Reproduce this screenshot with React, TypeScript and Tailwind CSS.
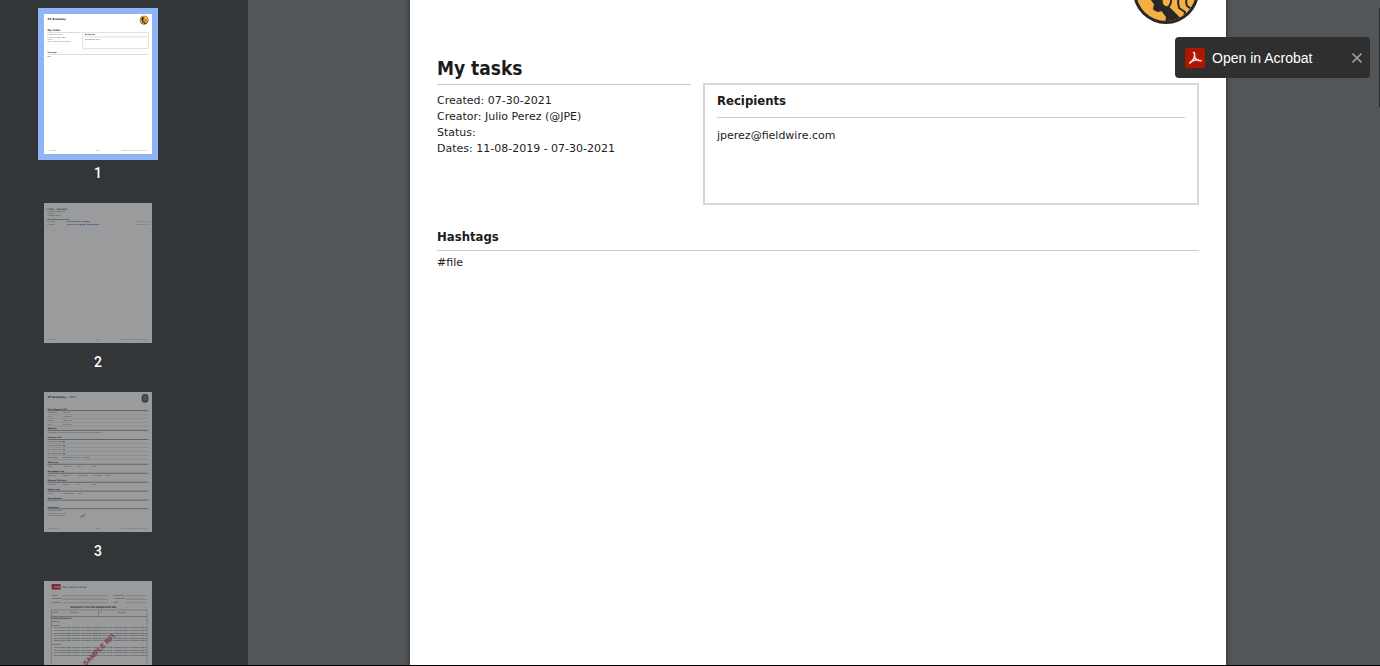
const ink = '#1c1c1c'

const Logo = ({ id }: { id: string }) => (
    <>
        <defs>
            <clipPath id={id}>
                <circle cx="33" cy="33" r="30" />
            </clipPath>
        </defs>
        <circle cx="33" cy="33" r="33" fill="#2a2726" />
        <circle cx="33" cy="33" r="30" fill="#f3b043" />
        <g clipPath={`url(#${id})`} fill="none" stroke="#2a2726" strokeWidth="2" strokeLinejoin="round">
            <path d="M17 12 L14 28 L19 42 L22 46 L21 51 L25 53 L29 52 L34 59 L33 66 H44 L46 60 L39 53 L36 50 L31 49 L28 42 L25 26 L34 14 Z" fill="#2a2726" />
            <path d="M28 36 L29 46 Q31 50 35 49 Q39 47 38 36" fill="#f3b043" />
            <path d="M47 36 L45 44 L46 50 L52 54 L51 61" />
            <path d="M55 36 L53 44 L54 48 L60 52" />
            <path d="M38 36 L47 30 L55 36 M25 26 L38 28" />
        </g>
    </>
)

// Thumbnails share the user units of a letter page, 816 x 1056
const Rule = ({ y, x = 27, to = 789, color = '#bdbdbd' }: { y: number; x?: number; to?: number; color?: string }) => (
    <line x1={x} x2={to} y1={y} y2={y} stroke={color} strokeWidth="4" />
)

const Footer = ({ name, page }: { name: string; page: string }) => (
    <g fontSize="11" fill="#777">
        <text x="27" y="1036">{name}</text>
        <text x="408" y="1036" textAnchor="middle">{page}</text>
        <text x="789" y="1036" textAnchor="end">Created with Fieldwire on 07-30-2021</text>
    </g>
)

const TasksPage = () => (
    <>
        <text x="27" y="46" fontSize="20" fontWeight="bold">SF Academy</text>
        <g transform="translate(723 12)"><Logo id="thumb-logo" /></g>
        <text x="27" y="130" fontSize="19" fontWeight="bold">My tasks</text>
        <Rule y={139} to={280} />
        <g fontSize="11">
            <text x="27" y="161">Created: 07-30-2021</text>
            <text x="27" y="177">Creator: Julio Perez (@JPE)</text>
            <text x="27" y="192">Status:</text>
            <text x="27" y="208">Dates: 11-08-2019 - 07-30-2021</text>
            <text x="307" y="194">jperez@fieldwire.com</text>
            <text x="27" y="322">#file</text>
        </g>
        <rect x="293" y="139" width="496" height="120" fill="none" stroke="#c4cccb" strokeWidth="4" />
        <text x="307" y="161" fontSize="13" fontWeight="bold">Recipients</text>
        <Rule y={172} x={307} to={776} />
        <text x="27" y="296" fontSize="13" fontWeight="bold">Hashtags</text>
        <Rule y={305} />
        <Footer name="SF Academy" page="Page 1" />
    </>
)

const FileTaskPage = () => (
    <>
        <text x="14" y="53" fontSize="16" fontWeight="bold"># 3021 - File Task</text>
        <g fontSize="11">
            <text x="24" y="68">Category: Uncategorized</text>
            <text x="24" y="84">Tag: #file</text>
            <text x="24" y="98">Created 07-30-2021</text>
            <text x="24" y="131" fontWeight="bold">Task messages (files &amp; PDF)</text>
            <text x="24" y="146">Julio Perez</text>
            <text x="24" y="166">Julio Perez</text>
            <text x="704" y="146">Jul 30, 2021 7:41</text>
            <text x="704" y="166">Jul 30, 2021 7:41</text>
        </g>
        <g fontSize="11" fill="#1010d8" fontWeight="bold">
            <text x="174" y="146">File: Daily report - Academy</text>
            <text x="174" y="166">File: RFI - Full request - Sample RFI.pdf</text>
        </g>
        <Footer name="SF Academy" page="Page 2" />
    </>
)

const reportSections = [
    { title: 'Daily Report 3/07', y: 132, rows: [['Report Name', 'Daily Rep'], ['Status', 'Completed'], ['Company', 'General Cont'], ['Date', '07-30-2021']], gap: 29 },
    { title: 'Weather', y: 281, rows: [['The weather for the day was sunny and clear for the entire project duration']], gap: 24 },
    { title: 'General Info', y: 350, rows: [['Any accidents today?', '■'], ['Any weather delays?', '■'], ['Any visitors on site?', '■'], ['Any schedule delays?', '■'], ['General Notes', 'Weather was fine and it is completed']], gap: 30 },
    { title: 'Work Log', y: 537, rows: [['Trade', 'Description', 'Hours', 'Notes']], gap: 24 },
    { title: 'Equipment Log', y: 605, rows: [['Description', 'Operators', 'Hours worked', 'Time started', 'Notes']], gap: 24 },
    { title: 'Material Delivery', y: 673, rows: [['Description', 'Quantity', 'Unit', 'Notes']], gap: 24 },
    { title: 'Safety Log', y: 740, rows: [['Activity', 'Hours of delay', 'Notes']], gap: 24 },
    { title: 'Attachments', y: 808, rows: [], gap: 24 },
    { title: 'Signature', y: 873, rows: [['Signature of Owner'], ['August 30, 2021 3:19 PM'], ['Electronic Name: Marcus']], gap: 19 },
]

const DailyReportPage = () => (
    <>
        <text x="27" y="46" fontSize="20" fontWeight="bold">
            SF Academy <tspan fontWeight="normal">— DR-1</tspan>
        </text>
        <g transform="translate(736 16)">
            <ellipse cx="27" cy="32" rx="26" ry="33" fill="#34383c" />
            <ellipse cx="27" cy="32" rx="17" ry="22" fill="#8a8578" />
            <path d="M12 24h30v10h-30zM20 40h14v12h-14z" fill="#84443c" />
        </g>
        {reportSections.map(({ title, y, rows, gap }) => (
            <g key={title}>
                <text x="27" y={y} fontSize="15" fontWeight="bold">{title}</text>
                <Rule y={y + 8} color="#333" />
                {rows.map((cells, i) => (
                    <g key={cells[0]} fontSize="11">
                        {cells.map((cell, j) => (
                            <text key={cell} x={27 + j * 108 + (j > 0 ? 10 : 0)} y={y + 28 + i * gap}>{cell}</text>
                        ))}
                        {gap > 24 && <Rule y={y + 38 + i * gap} color="#ccc" />}
                    </g>
                ))}
            </g>
        ))}
        <path d="M276 948l12-20 6 6-14 12 22-14 10-12-16 30" fill="none" stroke="#333" strokeWidth="2" />
        <Footer name="Daily Report 3/07" page="Page 3" />
    </>
)

const lorem = 'Lorem ipsum dolor sit amet, consectetur adipiscing elit, sed do eiusmod tempor incididunt ut labore'

const RfiPage = () => (
    <>
        <rect x="58" y="22" width="68" height="42" fill="#c21f26" />
        <text x="78" y="50" fontSize="20" fontWeight="bold" fill="#fff">CSU</text>
        <text x="134" y="51" fontSize="19">The California State</text>
        <g fontSize="14">
            <text x="58" y="110">Project</text>
            <text x="58" y="137">Contractor</text>
            <text x="58" y="163">Architect</text>
            <text x="527" y="110">Project No.</text>
            <text x="527" y="137">Contract No.</text>
            <text x="527" y="163">Date</text>
        </g>
        {[110, 137, 163].map((y) => (
            <g key={y}>
                <Rule y={y} x={140} to={485} color="#999" />
                <Rule y={y} x={620} to={770} color="#999" />
            </g>
        ))}
        <text x="375" y="202" fontSize="19" fontWeight="bold" textAnchor="middle">REQUEST FOR INFORMATION NO.</text>
        <rect x="54" y="218" width="724" height="500" fill="none" stroke="#666" strokeWidth="3" />
        <g fontSize="14">
            <text x="60" y="238">FROM:</text>
            <text x="200" y="238">Reply by</text>
            <text x="420" y="238">TO:</text>
            <text x="555" y="238">Reply to</text>
            <text x="60" y="284" fontWeight="bold">ITEMS REQUESTED</text>
            <text x="60" y="311">Subject:</text>
            <text x="60" y="338">Request:</text>
            <text x="60" y="485">Response:</text>
        </g>
        <Rule y={268} x={54} to={778} color="#666" />
        <line x1="412" x2="412" y1="218" y2="268" stroke="#666" strokeWidth="3" />
        <g fontSize="14">
            {[358, 377, 396, 415, 434, 453, 508, 527, 546, 565].map((y) => (
                <text key={y} x="76" y={y}>{lorem}</text>
            ))}
        </g>
        <text x="316" y="642" fontSize="52" fontWeight="bold" fontFamily="Liberation Sans Narrow, Liberation Sans" fill="#c43a3a" transform="rotate(-45 316 642)">SAMPLE RFI</text>
    </>
)

const pages = [
    { number: 1, content: <TasksPage /> },
    { number: 2, content: <FileTaskPage /> },
    { number: 3, content: <DailyReportPage /> },
    { number: 4, content: <RfiPage /> },
]

const Sidebar = () => (
    <aside className="w-[248px] shrink-0 overflow-hidden bg-[#323639] pt-2">
        <ul className="flex w-[196px] flex-col gap-2">
            {pages.map(({ number, content }) => (
                <li key={number}>
                    <a href={`#page-${number}`} className="flex flex-col items-center">
                        <div className={number === 1 ? 'bg-[#8fb5f5] p-[6px]' : 'p-[6px]'}>
                            <svg
                                viewBox="0 0 816 1056"
                                className={number === 1 ? 'h-[140px] w-[108px] bg-white' : 'h-[140px] w-[108px] bg-white opacity-50'}
                                fill={ink}
                                fontFamily="DejaVu Sans"
                            >
                                {content}
                            </svg>
                        </div>
                        <span className="pt-[2px] pb-1 font-[Roboto,sans-serif] text-sm leading-[23px] font-medium text-white">{number}</span>
                    </a>
                </li>
            ))}
        </ul>
    </aside>
)

const heading = "font-['DejaVu_Sans_Condensed','DejaVu_Sans',sans-serif] font-bold"

const Document = () => (
    <article
        id="page-1"
        className="w-[816px] bg-white px-[27px] font-['DejaVu_Sans',sans-serif] text-[11px] leading-4 text-[#1c1c1c] shadow-[0_0_4px_1px_#333]"
    >
        <header className="flex h-6 items-end justify-end">
            <svg viewBox="0 0 66 66" className="h-[66px] w-[66px]">
                <Logo id="page-logo" />
            </svg>
        </header>
        <div className="flex gap-3 pt-[30px]">
            <section className="w-1/3">
                <h1 className={`border-b border-[#c8c8c8] pb-[2px] text-[19px] leading-7 ${heading}`}>My tasks</h1>
                <div className="pt-2">
                    <p>Created: 07-30-2021</p>
                    <p>Creator: Julio Perez (@JPE)</p>
                    <p>Status:</p>
                    <p>Dates: 11-08-2019 - 07-30-2021</p>
                </div>
            </section>
            <section className="mt-[29px] h-[122px] flex-1 border-2 border-[#d8d8d8] px-3">
                <h2 className={`border-b border-[#ccc] py-[6px] text-[13px] leading-5 ${heading}`}>Recipients</h2>
                <p className="pt-[10px]">jperez@fieldwire.com</p>
            </section>
        </div>
        <section className="pt-[22px]">
            <h2 className={`border-b border-[#ccc] pb-[3px] text-[13px] leading-5 ${heading}`}>Hashtags</h2>
            <p className="pt-1">#file</p>
        </section>
    </article>
)

const AcrobatPrompt = () => (
    <div className="absolute top-[37px] right-[10px] flex h-[41px] w-[195px] items-center rounded bg-[#2f2f2f] pr-2 pl-[10px] font-['Liberation_Sans',sans-serif] text-sm text-white">
        <button className="flex flex-1 items-center gap-[7px]">
            <svg viewBox="0 0 20 20" className="h-5 w-5">
                <rect width="20" height="20" rx="3" fill="#b11600" />
                <path d="M8.500 4.500Q10 4.500 9.500 7.500Q9.500 10 11.500 11.500Q13.500 12.500 16 12.800M9.500 8Q9 12 4.800 15M6 13.500Q9 11.800 13 11.800" fill="none" stroke="#fbe4e0" strokeWidth="1.600" strokeLinecap="round" />
            </svg>
            Open in Acrobat
        </button>
        <button aria-label="Close" className="text-[#9a9a9a]">
            <svg viewBox="0 0 10 10" className="h-[10px] w-[10px]">
                <path d="M.5.5l9 9M9.500.5l-9 9" stroke="currentColor" strokeWidth="1.600" />
            </svg>
        </button>
    </div>
)

export default function App() {
    return (
        <div className="relative flex h-screen overflow-hidden border-b border-black bg-[#525659]">
            <Sidebar />
            <main className="flex flex-1 justify-center overflow-hidden pl-2">
                <Document />
            </main>
            {/* scroll thumb */}
            <div className="absolute top-2 right-0 h-[99px] w-px bg-[#2b2b2b]" />
            <AcrobatPrompt />
        </div>
    )
}
